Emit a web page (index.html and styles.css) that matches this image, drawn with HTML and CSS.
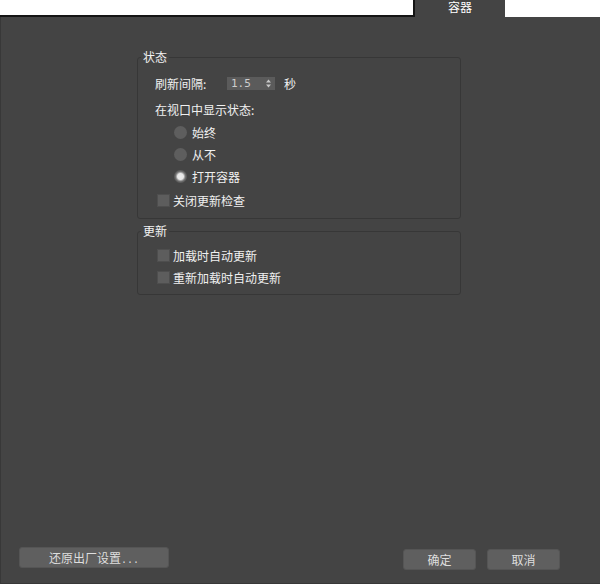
FILE: index.html
```html
<!DOCTYPE html>
<html lang="zh-CN">
<head>
<meta charset="utf-8">
<title>容器</title>
<link rel="stylesheet" href="styles.css">
</head>
<body>
<div class="window">
  <div class="topbar">
    <div class="strip-left"></div>
    <div class="tab">容器</div>
    <div class="strip-right"></div>
  </div>
  <div class="panel">
    <fieldset class="group group-status">
      <legend>状态</legend>
      <div class="group-body">
        <div class="row row-interval">
          <span class="label">刷新间隔:</span>
          <span class="spinner">
            <span class="spin-value">1.5</span>
            <svg class="spin-arrows" width="5" height="9" viewBox="0 0 5 9"><polygon points="0,3.5 2.5,0.5 5,3.5" fill="#c9c9c9"/><polygon points="0,5.5 2.5,8.5 5,5.5" fill="#c9c9c9"/></svg>
          </span>
          <span class="unit">秒</span>
        </div>
        <div class="row row-caption">在视口中显示状态:</div>
        <div class="radio-row first"><span class="radio"></span>始终</div>
        <div class="radio-row"><span class="radio"></span>从不</div>
        <div class="radio-row"><span class="radio checked"></span>打开容器</div>
        <div class="check-row spaced"><span class="check"></span>关闭更新检查</div>
      </div>
    </fieldset>
    <fieldset class="group group-update">
      <legend>更新</legend>
      <div class="group-body">
        <div class="check-row first"><span class="check"></span>加载时自动更新</div>
        <div class="check-row"><span class="check"></span>重新加载时自动更新</div>
      </div>
    </fieldset>
    <div class="footer">
      <button class="btn btn-reset">还原出厂设置<span class="dots">...</span></button>
      <div class="footer-right">
        <button class="btn btn-small">确定</button>
        <button class="btn btn-small">取消</button>
      </div>
    </div>
  </div>
</div>
</body>
</html>
```
FILE: styles.css
```css
html, body {
  margin: 0;
  padding: 0;
}
body {
  background: #444444;
  font-family: "Noto Sans CJK SC", "Noto Sans", sans-serif;
  font-size: 12px;
  color: #f0f0f0;
}
.window {
  width: 600px;
  height: 584px;
  display: flex;
  flex-direction: column;
  overflow: hidden;
}
.topbar {
  display: flex;
  height: 17px;
  flex: none;
}
.strip-left {
  width: 413px;
  height: 15px;
  background: #ffffff;
  border-bottom: 2px solid #151515;
  border-right: 2px solid #151515;
}
.tab {
  width: 90px;
  height: 17px;
  background: #444444;
  color: #ffffff;
  text-align: center;
  line-height: 13px;
}
.strip-right {
  flex: 1;
  height: 17px;
  background: #ffffff;
}
.panel {
  flex: 1;
  display: flex;
  flex-direction: column;
  border-left: 1px solid #383838;
  border-bottom: 1px solid #383838;
}
.group {
  box-sizing: border-box;
  width: 324px;
  margin: 0 0 0 136px;
  padding: 0;
  border: 1px solid #373737;
  border-radius: 3px;
  min-width: 0;
}
.group-status {
  margin-top: 33px;
}
.group-update {
  margin-top: 5px;
}
.group legend {
  margin-left: 3px;
  padding: 0 2px;
  line-height: 14px;
  height: 14px;
  color: #f2f2f2;
}
.group-body {
  padding: 0 0 7px 17px;
  display: flex;
  flex-direction: column;
}
.group-update .group-body {
  padding-bottom: 6px;
}
.row {
  display: flex;
  align-items: center;
  height: 20px;
}
.row-interval {
  margin-top: 9px;
}
.row-caption {
  margin-top: 6px;
}
.label {
  display: inline-block;
  width: 72px;
}
.spinner {
  box-sizing: border-box;
  width: 48px;
  height: 13px;
  background: #5b5b5b;
  display: flex;
  align-items: center;
  justify-content: space-between;
  padding: 0 4px 0 4px;
}
.spin-value {
  font-family: "DejaVu Sans Mono", "Liberation Mono", monospace;
  font-size: 11px;
  line-height: 13px;
  color: #cdcdcd;
}
.spin-arrows {
  display: block;
}
.unit {
  margin-left: 9px;
}
.radio-row, .check-row {
  display: flex;
  align-items: center;
  height: 22px;
}
.radio-row.first {
  margin-top: 2px;
}
.check-row.spaced {
  margin-top: 2px;
}
.check-row.first {
  margin-top: 6px;
}
.radio {
  width: 13px;
  height: 13px;
  border-radius: 50%;
  background: #5e5e5e;
  margin: 0 5px 0 19px;
  flex: none;
}
.radio.checked {
  background: radial-gradient(circle, #ececec 0, #e6e6e6 3px, #9c9c9c 4.2px, #6a6a6a 5.2px, #5e5e5e 6px);
}
.check {
  box-sizing: border-box;
  width: 13px;
  height: 13px;
  background: #5d5d5d;
  border: 1px solid #4e4e4e;
  margin: 0 3px 0 2px;
  flex: none;
}
.footer {
  margin-top: auto;
  display: flex;
  justify-content: space-between;
  align-items: flex-end;
  padding: 0 40px 13px 18px;
}
.footer-right {
  display: flex;
  gap: 11px;
}
.btn {
  box-sizing: border-box;
  height: 21px;
  background: #5f5f5f;
  border: 1px solid #555555;
  border-radius: 3px;
  color: #dedede;
  font-family: "Noto Sans CJK SC", "Noto Sans", sans-serif;
  font-size: 12px;
  line-height: 19px;
  padding: 0;
  text-align: center;
}
.btn-reset {
  width: 150px;
  margin-bottom: 2px;
}
.btn-small {
  width: 73px;
}
.dots {
  font-family: "Liberation Mono", monospace;
  font-size: 10px;
}
```
